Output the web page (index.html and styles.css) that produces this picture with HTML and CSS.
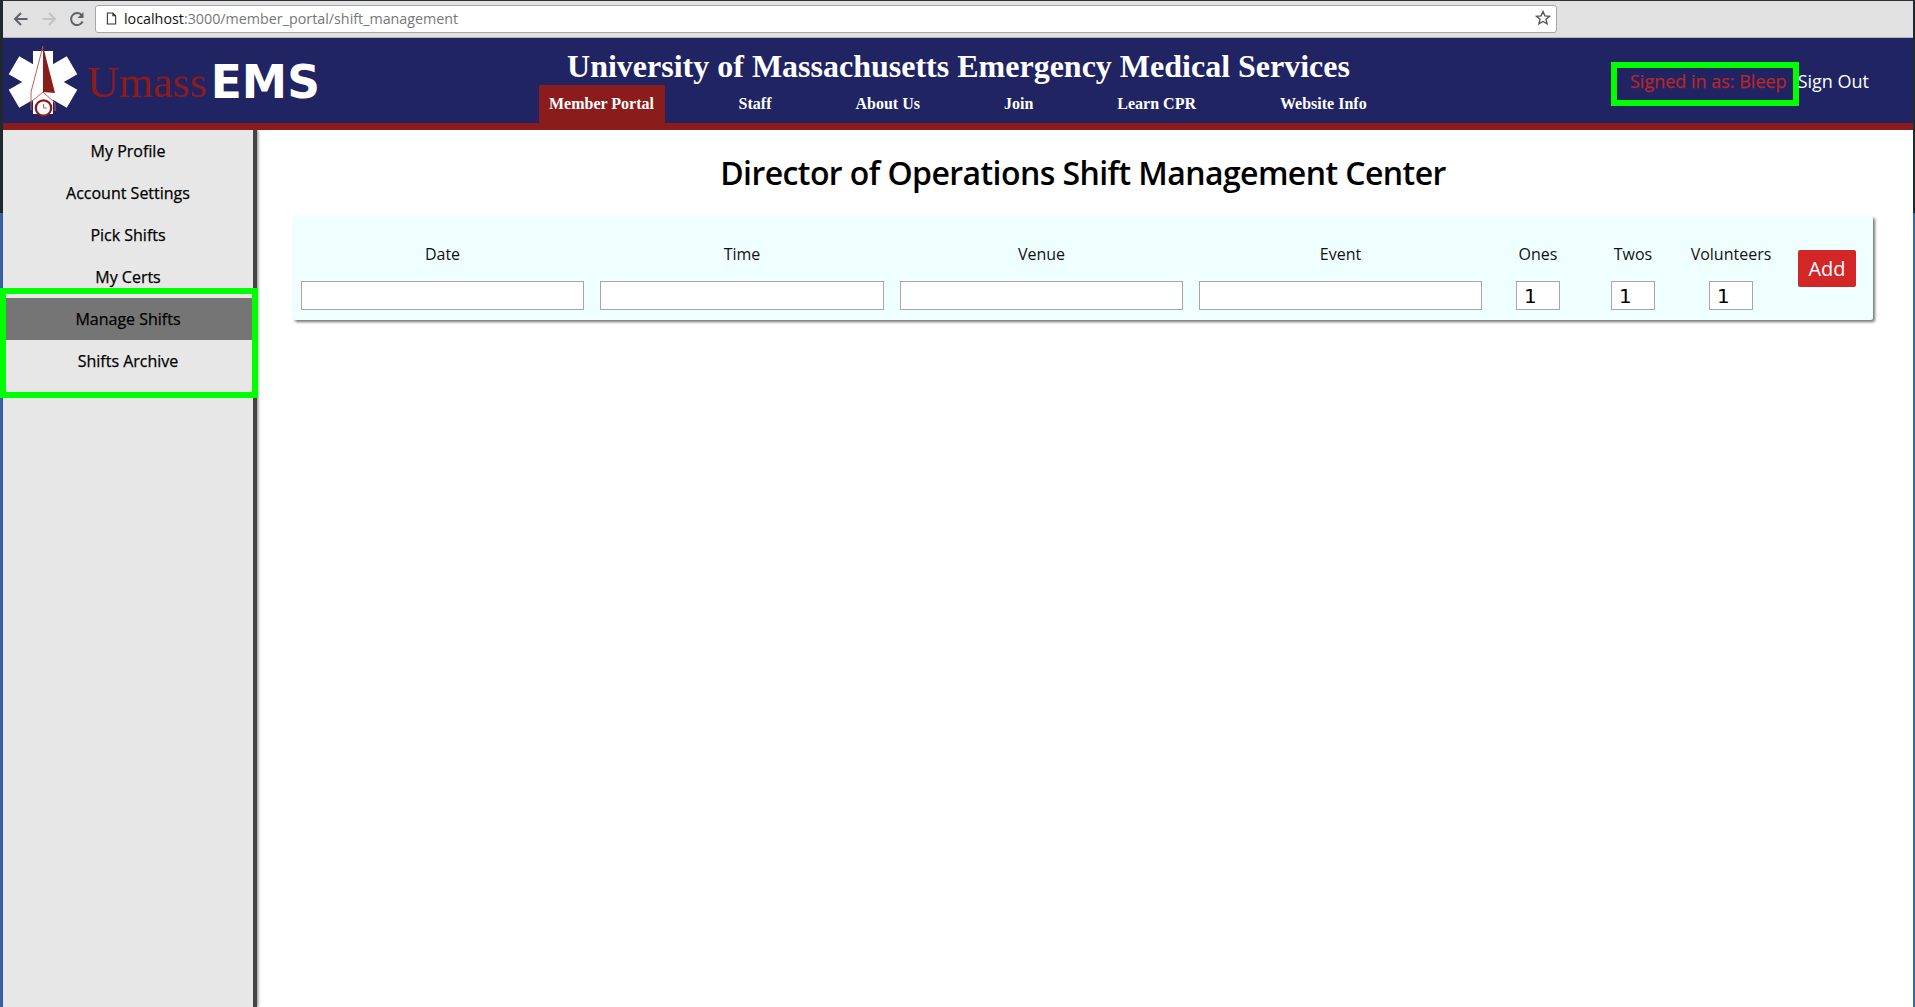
FILE: index.html
```html
<!DOCTYPE html>
<html>

<head>
	<title>Shift Management</title>
	<link rel="stylesheet" href="styles.css">
</head>

<body>
	<div class="toolbar">
		<svg class="tool-icon" viewBox="0 0 18 18"><path d="M15.5 9H3.5M9 3L3 9l6 6" fill="none" stroke="#5f6368" stroke-width="2"/></svg>
		<svg class="tool-icon" viewBox="0 0 18 18"><path d="M2.5 9h12M9 3l6 6-6 6" fill="none" stroke="#c4c4c4" stroke-width="2"/></svg>
		<svg class="tool-icon" viewBox="0 0 18 18"><path d="M14.6 11.5A6 6 0 1 1 14 5.6" fill="none" stroke="#5f6368" stroke-width="2"/><path d="M15.5 2v6h-6z" fill="#5f6368"/></svg>
		<div class="address">
			<svg class="page-icon" viewBox="0 0 12 14"><path d="M1.5 1h6l3 3v9h-9zM7.5 1v3h3" fill="#fff" stroke="#333" stroke-width="1.2"/></svg>
			<span class="host">localhost</span><span class="path">:3000/member_portal/shift_management</span>
			<svg class="star-icon" viewBox="0 0 16 16"><path d="M8 1.6l1.9 4.3 4.6.4-3.5 3 1.1 4.6L8 11.5l-4.1 2.4L5 9.3l-3.5-3 4.6-.4z" fill="#fff" stroke="#555" stroke-width="1.4"/></svg>
		</div>
	</div>

	<div class="page">
		<header class="header">
			<div class="brand">
				<svg class="logo" viewBox="0 0 72 72">
					<g fill="#fff">
						<rect x="25" y="5" width="20" height="63" />
						<rect x="24.5" y="2.5" width="21" height="67" transform="rotate(60 35 36)" />
						<rect x="24.5" y="2.5" width="21" height="67" transform="rotate(120 35 36)" />
					</g>
					<path d="M35 0L23 46v18" fill="none" stroke="#b9605f" stroke-width="1"/>
					<path d="M35 0l12 47-12-1z" fill="#8a1c1c"/>
					<path d="M35 46L23 56M35 46l12 11v8" fill="none" stroke="#b9605f" stroke-width="1"/>
					<circle cx="35.5" cy="62" r="7.7" fill="#fff" stroke="#8a1c1c" stroke-width="2.3"/>
					<path d="M35.5 58V62h3.5" fill="none" stroke="#b9605f" stroke-width="1"/>
				</svg>
				<span class="brand-umass">Umass</span><span class="brand-ems">EMS</span>
			</div>
			<div class="header-center">
				<h1>University of Massachusetts Emergency Medical Services</h1>
				<nav class="nav">
					<a class="active">Member Portal</a>
					<a>Staff</a>
					<a>About Us</a>
					<a>Join</a>
					<a>Learn CPR</a>
					<a>Website Info</a>
				</nav>
			</div>
			<div class="user">
				<span class="signed-in">Signed in as: Bleep</span>
				<a class="sign-out">Sign Out</a>
			</div>
		</header>

		<div class="content">
			<aside class="sidebar">
				<a>My Profile</a>
				<a>Account Settings</a>
				<a>Pick Shifts</a>
				<a>My Certs</a>
				<a class="current">Manage Shifts</a>
				<a>Shifts Archive</a>
			</aside>
			<main class="main">
				<h2>Director of Operations Shift Management Center</h2>
				<form class="shift-form">
					<label>Date</label>
					<label>Time</label>
					<label>Venue</label>
					<label>Event</label>
					<label>Ones</label>
					<label>Twos</label>
					<label>Volunteers</label>
					<button type="button" class="add">Add</button>
					<input type="text">
					<input type="text">
					<input type="text">
					<input type="text">
					<input type="text" class="num" value="1">
					<input type="text" class="num" value="1">
					<input type="text" class="num" value="1">
				</form>
			</main>
		</div>
	</div>

	<div class="highlight highlight-user"></div>
	<div class="highlight highlight-menu"></div>
</body>

</html>
```

FILE: styles.css
```css
html,
body {
	height: 100%;
}

body {
	background: linear-gradient(#1f2a30 213px, #3a63a8 213px);
	font-family: "Open Sans", sans-serif;
	margin: 0;
	overflow: hidden;
	position: relative;
}

a {
	cursor: pointer;
}

/* browser bar */
.toolbar {
	align-items: center;
	background-color: #e1e1e1;
	border-bottom: 1px solid #b4b4b4;
	border-top: 1px solid #2b3238;
	box-sizing: border-box;
	display: flex;
	height: 38px;
	margin: 0 2px 0 3px;
	padding-left: 9px;
}

.tool-icon {
	height: 18px;
	margin-right: 10px;
	width: 18px;
}

.address {
	align-items: center;
	background-color: #fff;
	border: 1px solid #a8a8a8;
	border-radius: 3px;
	box-sizing: border-box;
	display: flex;
	font-size: 14.3px;
	height: 28px;
	margin-left: -1px;
	padding: 0 5px 2px 10px;
	width: 1462px;
}

.page-icon {
	height: 13px;
	margin-right: 7px;
	width: 11px;
}

.host {
	color: #111;
}

.path {
	color: #777;
}

.star-icon {
	height: 16px;
	margin-left: auto;
	width: 16px;
}

.page {
	background-color: #fff;
	display: flex;
	flex-direction: column;
	height: 969px;
	margin: 0 2px 0 3px;
}

/* site header */
.header {
	background-color: #202463;
	border-bottom: 7px solid #8a1c1c;
	display: flex;
	flex: none;
	height: 85px;
	position: relative;
}

.brand {
	align-items: center;
	display: flex;
	padding: 3px 0 0 5px;
	width: 400px;
}

.logo {
	height: 72px;
	margin-right: 7px;
	width: 72px;
}

.brand-umass {
	color: #8a1c1c;
	font-family: "Liberation Serif", serif;
	font-size: 44px;
}

.brand-ems {
	color: #fff;
	font-family: "DejaVu Sans", sans-serif;
	font-size: 45.5px;
	font-weight: bold;
	margin-left: 4px;
}

.header-center {
	display: flex;
	flex-direction: column;
	font-family: "Liberation Serif", serif;
	font-weight: bold;
	left: 0;
	position: absolute;
	right: 0;
	text-align: center;
}

h1 {
	color: #fff;
	font-size: 32px;
	line-height: 38px;
	margin: 0;
	padding: 9px 0 0 1px;
}

.nav {
	display: flex;
	gap: 64px;
	height: 38px;
	margin-left: 536px;
}

.nav a {
	color: #fff;
	font-size: 16px;
	line-height: 38px;
	padding: 0 10px;
}

.nav a.active {
	background-color: #8a1c1c;
	padding-right: 10.6px;
}

.user {
	align-items: center;
	display: flex;
	font-size: 18px;
	margin-left: auto;
	padding-right: 44px;
	z-index: 1;
}

.signed-in {
	color: #b82626;
	margin-right: 11px;
	-webkit-text-stroke: 0.25px #b82626;
}

.sign-out {
	color: #fff;
}

.content {
	display: flex;
	flex: 1;
}

/* left menu */
.sidebar {
	background-color: #e7e7e7;
	box-shadow: 1px 0 3px rgba(0, 0, 0, 0.5);
	border-right: 4px solid #444;
	box-sizing: border-box;
	display: flex;
	flex: none;
	flex-direction: column;
	width: 254px;
}

.sidebar a {
	color: #000;
	font-size: 16px;
	font-weight: 500;
	height: 42px;
	-webkit-text-stroke: 0.25px #000;
	line-height: 42px;
	text-align: center;
}

.sidebar a.current {
	background-color: #757575;
}

.main {
	flex: 1;
	padding: 0 40px 0 36px;
}

h2 {
	color: #000;
	font-size: 32px;
	font-weight: 600;
	letter-spacing: -0.58px;
	line-height: 46px;
	margin: 20px 0;
	text-align: center;
}

.shift-form {
	background-color: #efffff;
	border-radius: 2px;
	box-shadow: 2px 2px 3px rgba(0, 0, 0, 0.55);
	display: grid;
	gap: 13px 16px;
	grid-template-columns: 283px 284px 283px 283px 80px 78px 86px 74px;
	grid-template-rows: 28px 29px;
	height: 104px;
	box-sizing: border-box;
	padding: 24px 8px 10px 8px;
}

.shift-form label {
	color: #111;
	font-size: 16px;
	line-height: 28px;
	text-align: center;
}

.shift-form input {
	background-color: #fff;
	border: 1px solid #a6a6a6;
	box-sizing: border-box;
	font-family: "DejaVu Sans", sans-serif;
	font-size: 20px;
	height: 29px;
	padding: 0 7px;
	width: 100%;
}

.shift-form input.num {
	justify-self: center;
	width: 44px;
}

.add {
	background-color: #d32626;
	border: none;
	border-radius: 2px;
	color: #fff;
	font-family: "Open Sans", sans-serif;
	font-size: 20px;
	grid-column: 8;
	grid-row: 1 / span 2;
	height: 37px;
	justify-self: center;
	margin-top: 10px;
	padding: 0;
	width: 58px;
}

/* green marker boxes drawn over the screenshot */
.highlight {
	border: 6px solid #00ff00;
	box-sizing: border-box;
	position: absolute;
}

.highlight-user {
	height: 44px;
	left: 1611px;
	top: 62px;
	width: 188px;
}

.highlight-menu {
	height: 110px;
	left: 0;
	top: 288px;
	width: 258px;
}
```
